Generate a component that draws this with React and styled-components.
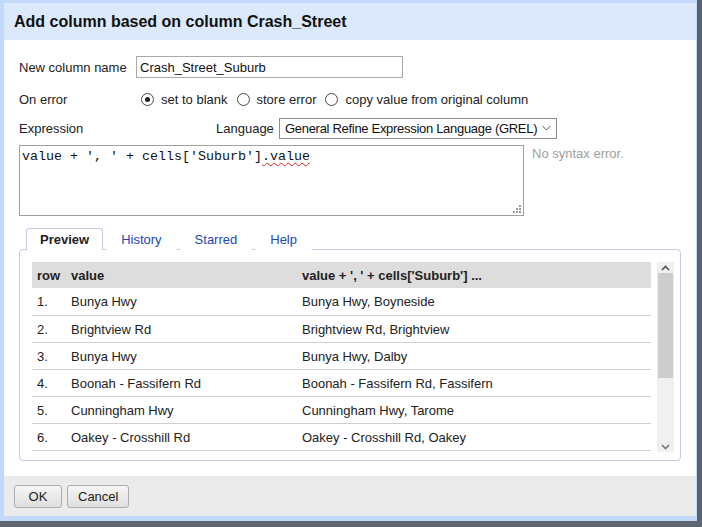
import React from "react";
import styled, { createGlobalStyle } from "styled-components";

const GlobalStyle = createGlobalStyle`
  html, body { margin: 0; padding: 0; }
  body {
    font-family: "Liberation Sans", Arial, sans-serif;
    font-size: 13px;
    color: #222;
    overflow: hidden;
  }
  * { box-sizing: border-box; }
`;

const Desktop = styled.div`
  width: 702px;
  height: 527px;
  background: #5c6570;
`;

const Frame = styled.div`
  width: 699px;
  height: 521px;
  background: #c3d9f9;
  border-right: 2px solid #56606b;
  padding: 3px 2px 5px 4px;
  display: flex;
`;

const Dialog = styled.div`
  flex: 1;
  display: flex;
  flex-direction: column;
  background: #fff;
`;

const TitleBar = styled.div`
  height: 37px;
  flex: none;
  background: #dce8fb;
  padding-left: 10px;
  display: flex;
  align-items: center;
  font-size: 16px;
  font-weight: bold;
  color: #111;
`;

const Body = styled.div`
  flex: 1;
  padding: 16px 15px 0 15px;
  display: flex;
  flex-direction: column;
`;

const FormRow = styled.div`
  display: flex;
  align-items: center;
  height: 22px;
  margin-bottom: ${(p) => p.$gap}px;
`;

const Label = styled.div`
  width: ${(p) => p.$w}px;
  flex: none;
  color: #222;
`;

const TextInput = styled.div`
  width: 267px;
  height: 22px;
  border: 1px solid #a9a9a9;
  padding: 0 3px;
  display: flex;
  align-items: center;
  color: #111;
`;

const RadioGroup = styled.div`
  display: flex;
  align-items: center;
`;

const RadioOption = styled.label`
  display: flex;
  align-items: center;
  margin-right: 4px;
  color: #222;
`;

const RadioCircle = styled.span`
  width: 13px;
  height: 13px;
  border-radius: 50%;
  border: 1px solid #4a4a4a;
  background: #fff;
  margin: 0 7px 0 5px;
  display: flex;
  align-items: center;
  justify-content: center;
  &::after {
    content: "";
    width: 5px;
    height: 5px;
    border-radius: 50%;
    background: ${(p) => (p.$checked ? "#222" : "transparent")};
  }
`;

const SelectBox = styled.div`
  width: 278px;
  height: 21px;
  flex: none;
  border: 1px solid #8c8c8c;
  padding: 0 5px 0 5px;
  display: flex;
  align-items: center;
  justify-content: space-between;
  color: #111;
  white-space: nowrap;
  overflow: hidden;
`;

const SelectText = styled.span`
  white-space: nowrap;
  letter-spacing: -0.3px;
`;

const ExprRow = styled.div`
  display: flex;
  align-items: flex-start;
`;

const CodeBox = styled.div`
  position: relative;
  width: 505px;
  height: 71px;
  border: 1px solid #a0a0a0;
  padding: 3px 2px;
  font-family: "Liberation Mono", "Courier New", monospace;
  font-size: 13.33px;
  line-height: 16px;
  color: #111;
  white-space: pre;
`;

const Misspelled = styled.span`
  text-decoration: underline wavy #e02020;
  text-decoration-thickness: 1px;
  text-underline-offset: 2px;
`;

const Grip = styled.svg`
  position: absolute;
  right: 2px;
  bottom: 2px;
`;

const Status = styled.div`
  margin-left: 8px;
  margin-top: 1px;
  color: #a0a0a0;
`;

const Tabs = styled.div`
  margin-top: 12px;
  display: flex;
  flex-direction: column;
`;

const TabBar = styled.div`
  display: flex;
  padding-left: 7px;
  gap: 3px;
  position: relative;
  z-index: 1;
`;

const Tab = styled.div`
  height: 22px;
  display: flex;
  align-items: center;
  padding: 0 ${(p) => (p.$active ? 13 : 14)}px;
  border: 1px solid ${(p) => (p.$active ? "#c3cbe6" : "transparent")};
  border-bottom: none;
  border-radius: 3px 3px 0 0;
  background: #fff;
  font-weight: ${(p) => (p.$active ? "bold" : "normal")};
  color: ${(p) => (p.$active ? "#222" : "#2347b3")};
  margin-bottom: -1px;
  padding-bottom: 1px;
`;

const Panel = styled.div`
  width: 662px;
  height: 212px;
  border: 1px solid #c3cbe6;
  border-radius: 4px;
  padding: 12px 6px 8px 12px;
  display: flex;
`;

const TableWrap = styled.div`
  width: 619px;
  margin-right: 6px;
  overflow: hidden;
`;

const Table = styled.table`
  width: 100%;
  border-collapse: collapse;
`;

const HeadCell = styled.th`
  height: 26px;
  background: #dddddd;
  text-align: left;
  font-weight: bold;
  color: #222;
  padding: 0 0 0 5px;
  width: ${(p) => (p.$w ? `${p.$w}px` : "auto")};
`;

const Cell = styled.td`
  height: 27px;
  border-bottom: 1px solid #cfcfcf;
  padding: 1px 0 0 5px;
  color: #222;
`;

const Scrollbar = styled.div`
  width: 17px;
  background: #f0f0f0;
  display: flex;
  flex-direction: column;
  align-items: center;
`;

const ScrollArrow = styled.div`
  height: 11px;
  width: 100%;
  display: flex;
  align-items: center;
  justify-content: center;
`;

const Thumb = styled.div`
  width: 15px;
  height: 105px;
  background: #cdcdcd;
`;

const Spacer = styled.div`
  flex: 1;
`;

const Footer = styled.div`
  height: 40px;
  flex: none;
  background: #ebebeb;
  display: flex;
  align-items: center;
  padding: 1px 10px 0;
  gap: 5px;
`;

const Button = styled.button`
  height: 23px;
  min-width: ${(p) => p.$w}px;
  padding: 0 10px;
  border: 1px solid #adadad;
  border-radius: 3px;
  background: linear-gradient(#f6f6f6, #dfdfdf);
  font-family: "Liberation Sans", Arial, sans-serif;
  font-size: 13px;
  color: #222;
`;

const rows = [
  ["Bunya Hwy", "Bunya Hwy, Boyneside"],
  ["Brightview Rd", "Brightview Rd, Brightview"],
  ["Bunya Hwy", "Bunya Hwy, Dalby"],
  ["Boonah - Fassifern Rd", "Boonah - Fassifern Rd, Fassifern"],
  ["Cunningham Hwy", "Cunningham Hwy, Tarome"],
  ["Oakey - Crosshill Rd", "Oakey - Crosshill Rd, Oakey"],
];

export default function App() {
  return (
    <>
      <GlobalStyle />
      <Desktop>
        <Frame>
          <Dialog>
            <TitleBar>Add column based on column Crash_Street</TitleBar>
            <Body>
              <FormRow $gap={10}>
                <Label $w={117}>New column name</Label>
                <TextInput>Crash_Street_Suburb</TextInput>
              </FormRow>
              <FormRow $gap={7}>
                <Label $w={117}>On error</Label>
                <RadioGroup>
                  <RadioOption>
                    <RadioCircle $checked />
                    set to blank
                  </RadioOption>
                  <RadioOption>
                    <RadioCircle />
                    store error
                  </RadioOption>
                  <RadioOption>
                    <RadioCircle />
                    copy value from original column
                  </RadioOption>
                </RadioGroup>
              </FormRow>
              <FormRow $gap={6}>
                <Label $w={197}>Expression</Label>
                <Label $w={63}>Language</Label>
                <SelectBox>
                  <SelectText>General Refine Expression Language (GREL)</SelectText>
                  <svg width="9" height="6" viewBox="0 0 9 6">
                    <path d="M0.5 1 L4.5 5 L8.5 1" fill="none" stroke="#555" strokeWidth="1" />
                  </svg>
                </SelectBox>
              </FormRow>
              <ExprRow>
                <CodeBox>
                  {"value + ', ' + cells['Suburb']"}
                  <Misspelled>.value</Misspelled>
                  <Grip width="8" height="8" viewBox="0 0 8 8">
                    <g fill="#9a9a9a">
                      <rect x="6" y="0" width="2" height="2" />
                      <rect x="3" y="3" width="2" height="2" />
                      <rect x="6" y="3" width="2" height="2" />
                      <rect x="0" y="6" width="2" height="2" />
                      <rect x="3" y="6" width="2" height="2" />
                      <rect x="6" y="6" width="2" height="2" />
                    </g>
                  </Grip>
                </CodeBox>
                <Status>No syntax error.</Status>
              </ExprRow>
              <Tabs>
                <TabBar>
                  <Tab $active>Preview</Tab>
                  <Tab>History</Tab>
                  <Tab>Starred</Tab>
                  <Tab>Help</Tab>
                </TabBar>
                <Panel>
                  <TableWrap>
                    <Table>
                      <thead>
                        <tr>
                          <HeadCell $w={34}>row</HeadCell>
                          <HeadCell $w={231}>value</HeadCell>
                          <HeadCell>value + ', ' + cells['Suburb'] ...</HeadCell>
                        </tr>
                      </thead>
                      <tbody>
                        {rows.map((r, i) => (
                          <tr key={i}>
                            <Cell>{i + 1}.</Cell>
                            <Cell>{r[0]}</Cell>
                            <Cell>{r[1]}</Cell>
                          </tr>
                        ))}
                      </tbody>
                    </Table>
                  </TableWrap>
                  <Scrollbar>
                    <ScrollArrow>
                      <svg width="9" height="6" viewBox="0 0 9 6">
                        <path d="M1 5 L4.5 1.5 L8 5" fill="none" stroke="#555" strokeWidth="1.6" />
                      </svg>
                    </ScrollArrow>
                    <Thumb />
                    <Spacer />
                    <ScrollArrow>
                      <svg width="9" height="6" viewBox="0 0 9 6">
                        <path d="M1 1 L4.5 4.5 L8 1" fill="none" stroke="#777" strokeWidth="1.6" />
                      </svg>
                    </ScrollArrow>
                  </Scrollbar>
                </Panel>
              </Tabs>
            </Body>
            <Footer>
              <Button $w={48}>OK</Button>
              <Button $w={53}>Cancel</Button>
            </Footer>
          </Dialog>
        </Frame>
      </Desktop>
    </>
  );
}
